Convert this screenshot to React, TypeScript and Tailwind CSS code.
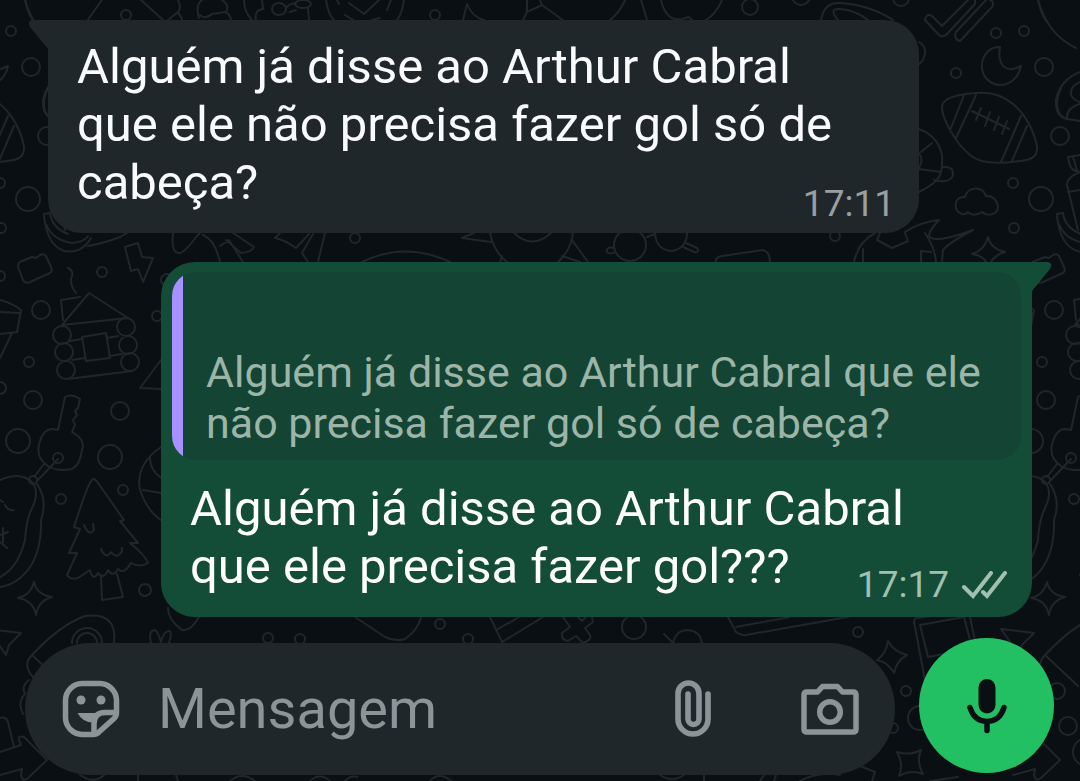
import type { ReactNode } from 'react';

const dots: [number, number, number][] = [
  [126, 15, 5], [167, 280, 6], [102, 272, 5], [41, 310, 9], [157, 316, 5], [29, 362, 5],
  [33, 400, 9], [18, 441, 12], [0, 388, 6], [120, 411, 9], [110, 457, 12], [61, 499, 5],
  [123, 490, 5], [145, 590, 6], [268, 638, 5], [300, 639, 5], [440, 624, 5], [468, 639, 5],
  [634, 627, 12], [858, 632, 5], [906, 691, 5], [920, 718, 12], [893, 728, 5], [1057, 691, 8],
  [1068, 726, 9], [435, 15, 5], [750, 7, 8], [801, -4, 9], [901, -2, 8], [996, 33, 5],
  [1024, 31, 5], [956, 73, 5], [1044, 67, 9], [1060, 136, 9], [1013, 183, 5], [1041, 199, 12],
  [1014, 228, 5], [835, 236, 5], [355, 238, 5], [1087, 752, 14], [1013, 276, 5],
];

const doodles = [
  // top edge
  'M25 0Q28 14 34 22 M102 0L87 21 M141 0L163 20 M178 0Q182 8 178 12L168 20 M178 12L182 19',
  'M199 18Q195 5 202 0 M200 15Q205 20 212 14L225 12Q230 14 231 20 M222 0Q230 5 226 12 M244 0Q244 12 252 20',
  'M262 0L263 9Q254 10 256 20 M272 9a7 6 0 1 0 14 0a7 6 0 1 0-14 0 M295 4a8 4 0 1 0 16 0a8 4 0 1 0-16 0 M286 8Q291 2 296 4 M308 8L309 20 M290 12l6-2',
  'M326 0Q328 14 334 20 M404 0Q402 14 397 20 M349 3L364 14L379 0 M337 0l2 4 M391 0l-4 10 M345 15l8 5 M372 20l8-2',
  'M463 20L467 4Q472 17 484 20 M527 0L527 12L523 20 M527 12L542 5L564 21 M540 0L542 5',
  'M625 0Q620 12 610 20 M641 0L647 20 M661 0Q666 22 682 19L689 17L692 20 M722 0Q716 14 706 20',
  'M821 20Q824 2 840 3Q870 5 893 20 M838 20Q828 8 840 9Q855 10 868 20',
  // check marks
  'M968 0L942 26L932 16Q926 13 925 20L939 35Q943 38 947 34L975 4V0 M986 0L956 32Q953 39 960 41L992 7Q995 2 990 0',
  'M1038 0Q1048 35 1076 48 M919 42Q926 46 925 54Q923 62 919 64',
  // moon and football
  'M1000 47C997 66 1006 74 1021 66C1018 80 1008 85 1000 85C988 84 981 75 982 64C983 54 990 47 1000 47Z',
  'M942 107C942 94 982 90 997 95C1022 104 1033 128 1037 146C1038 158 1030 160 1020 161C1000 164 980 164 970 155C955 143 942 118 942 107Z M964 95L951 128 M976 95L956 138 M1021 116L1001 162 M1027 126L1012 161',
  'M972 111L1009 129 M981 108l-5 12 M990 112l-5 14 M999 117l-5 13 M1007 121l-5 13',
  // wheel and cloud
  'M919 129Q938 136 942 155Q943 170 939 177Q935 184 919 192 M919 153Q924 160 919 168 M921 152L932 143 M919 169L941 172 M943 167Q954 166 953 175Q950 184 934 180',
  'M960 213C953 210 954 196 965 197C967 187 982 185 986 196C995 195 1001 206 996 212C990 217 984 214 982 212C976 216 970 215 968 212Q964 216 960 213Z',
  // egg and bottle
  'M1080 72Q1060 80 1056 100Q1055 116 1067 119L1080 121 M1080 82Q1070 86 1071 95Q1073 100 1080 102 M1067 119Q1066 108 1080 104',
  'M1068 157Q1070 172 1078 171 M1068 157L1080 155 M1073 157L1077 170 M1080 172Q1066 178 1067 185L1078 230 M1068 192L1080 190',
  // football player and flame
  'M854 262Q858 242 875 233 M925 233Q935 248 936 262 M863 262V249 M880 233L877 240L892 248L908 241L905 233 M921 262V251L931 252',
  'M905 232Q920 222 939 220Q925 235 931 238Q940 242 973 230Q950 242 943 250L942 262',
  'M988 237Q991 249 1005 252Q991 256 989 268Q985 255 972 254Q985 250 988 237Z',
  // strip between the messages
  'M48 88Q40 105 48 116 M44 214l6-1Q52 228 68 234 M44 216Q47 245 64 251Q82 254 91 238 M46 224Q52 240 72 243Q84 242 88 236 M88 246Q105 243 120 237L127 233',
  'M173 233Q171 252 178 253Q184 254 196 237L200 233 M203 235Q215 240 220 262 M233 233L254 247Q252 252 241 253L226 240 M220 246L229 240L243 262 M275 238Q285 240 296 248L309 234 M275 238L280 233 M325 233L318 262 M313 234L302 253L308 262',
  'M362 262Q405 241 450 262 M490 233Q494 252 507 262 M573 233Q571 250 558 262 M514 233Q532 250 551 233 M491 242L462 238L474 233 M572 240L588 262 M502 256L500 262 M562 256L580 262',
  'M614 245a16 16 0 1 0 32 0a16 16 0 1 0-32 0 M655 233Q656 250 672 251Q687 248 687 233 M647 237l8-3 M614 248q-8-2-7 4q3 3 8 0 M686 243L697 248Q700 253 694 252L683 247 M716 262Q715 257 722 256L763 250Q770 252 770 262',
  // brick, lightning, cabin
  'M18 267L23 280Q25 284 30 282L50 273Q53 271 51 267L46 256Q44 253 40 255L36 258L32 257L22 261Q18 262 18 267Z',
  'M125 247L138 243L142 257L153 258L143 282L138 269L131 271Z',
  'M68 268Q75 271 71 279Q70 285 76 293 M63 320L61 300L80 297 M62 325L89 293L128 318Z',
  'M82 337L106 333L110 358L86 361Z M70 341L82 339 M72 360L85 358 M68 379L132 371 M107 338L118 336 M109 356L122 354',
  'M53 335a9 9 0 1 0 18 0a9 9 0 1 0-18 0 M55 352a9 9 0 1 0 18 0a9 9 0 1 0-18 0 M57 370a9 9 0 1 0 18 0a9 9 0 1 0-18 0',
  'M117 327a9 9 0 1 0 18 0a9 9 0 1 0-18 0 M119 345a9 9 0 1 0 18 0a9 9 0 1 0-18 0 M121 362a9 9 0 1 0 18 0a9 9 0 1 0-18 0',
  'M0 300Q12 303 21 310L17 332L0 334 M0 312L20 313 M12 333L0 358 M161 360L140 388L161 389',
  // key ring
  'M58 430L65 397Q72 393 80 399L78 408L75 411L77 415L73 420L75 425L72 432Q86 440 82 450Q80 465 72 469Q58 472 48 466Q36 458 39 445Q42 430 52 429Z M53 458a5 5 0 1 0 10 0a5 5 0 1 0-10 0 M44 464L34 477 M58 459L37 481 M29 480a4 4 0 1 0 8 0a4 4 0 1 0-8 0',
  'M0 480Q20 471 32 482Q40 492 32 508Q26 520 25 540Q18 568 0 577 M37 484Q48 500 41 520Q42 560 20 578Q10 586 0 587 M0 500l3 2 M5 505Q8 511 14 510 M0 535L8 532 M0 542l7 6 M3 528v14',
  // tree and ornament
  'M92 480Q88 483 74 527L80 529L69 553L77 553L67 575Q70 580 78 578Q84 574 90 570Q93 582 98 573Q104 580 108 570Q113 578 118 569Q124 575 131 563Q140 568 148 563Q145 555 130 543L138 543L120 521L124 520L98 483Q94 477 92 480Z M101 577L102 600L123 597L117 574',
  'M84 525Q89 537 94 530L93 524 M101 549Q106 560 111 552Q117 560 122 551V548 M161 447Q135 465 140 490Q148 512 161 520 M150 458Q150 470 161 478 M143 490L161 493',
  'M34 582Q37 595 52 597Q38 601 36 615Q33 600 18 598Q31 595 34 582Z',
  // strip above the composer
  'M33 677Q22 665 32 655Q60 625 85 616Q118 612 114 643 M72 643a15 15 0 0 1 30 0 M77 643a10 10 0 0 1 20 0 M32 655L65 686 M168 608Q168 620 182 630Q190 632 199 617',
  'M151 643Q148 630 155 630Q158 632 161 642Q164 630 170 631Q172 634 169 643 M355 617L385 637Q395 642 405 639Q418 630 421 617',
  'M490 617L502 642L543 617 M498 629L519 617 M563 617L570 627L562 633Q561 640 568 641L576 636L583 643Q592 640 590 635L585 628L593 622L592 617 M578 617L582 621L586 617',
  'M673 643Q676 630 688 630Q700 631 702 643 M664 634L673 643 M728 617L736 632Q740 635 746 635L780 629L848 617 M736 627L790 617',
  'M888 641Q894 652 907 655Q897 660 894 673Q888 662 877 660Q886 654 888 641Z',
  'M925 680L914 622Q914 618 918 618L960 612 M964 617L970 640 M970 617L976 645 M920 625L964 617 M920 625L928 657L955 652',
  'M897 752Q910 756 921 750Q916 762 923 774Q910 769 899 776Q904 764 897 752Z',
  'M1001 629L1034 633L1022 645L1019 655Z',
  // bottom edge
  'M29 680q-8 6-4 14q-8 8-2 20 M0 718Q6 716 8 722L14 747 M0 752L21 745L19 740Q18 735 24 737L47 760L28 778Q22 782 21 775L22 769L0 775',
  'M80 775Q95 785 105 774 M138 775v6 M176 775l2 6 M230 781Q242 771 255 781 M310 781Q320 772 330 781 M345 781q6-6 12-4 M430 781q8-10 22 0 M660 775q12 8 24 0 M704 775v6 M760 781l4-6 M776 775l-2 6 M800 781q20-10 40-6 M860 766l15 6l-3 9 M930 781l28-4',
];

function Wallpaper() {
  return (
    <svg
      aria-hidden="true"
      className="absolute inset-0 h-full w-full"
      fill="none"
      stroke="#20262a"
      strokeWidth={2}
      strokeLinejoin="round"
      strokeLinecap="round"
    >
      <g id="doodles">
        {dots.map(([x, y, r]) => (
          <circle key={`${x}-${y}`} cx={x} cy={y} r={r} />
        ))}
        {doodles.map((d) => (
          <path key={d} d={d} />
        ))}
      </g>
      {/* the pattern repeats sideways */}
      <use href="#doodles" x={-1013} />
      <use href="#doodles" x={1013} />
    </svg>
  );
}

// The time floats beside the last line of the text
function MessageText({ children }: { children: ReactNode }) {
  return <p className="flow-root pr-10 text-[49px] leading-[58px]">{children}</p>;
}

function StickerIcon() {
  return (
    <svg className="size-[58px]" viewBox="0 0 58 58" fill="none" aria-hidden="true">
      <path
        d="M20 3.500H38A17 17 0 0 1 54.500 20V32.500Q54.500 36 52 38.500L37 52Q34.500 54.500 31 54.500H20A17 17 0 0 1 3.500 38V20A17 17 0 0 1 20 3.500Z"
        stroke="currentColor"
        strokeWidth={5.500}
      />
      <circle cx="19" cy="20" r="4.500" fill="currentColor" />
      <circle cx="39" cy="20" r="4.500" fill="currentColor" />
      <path d="M15.500 33H36Q32 38 32 42.500Q21 43 15.500 33Z" fill="currentColor" />
      <path d="M32 54V44Q32 32.500 43 32.500H54" stroke="currentColor" strokeWidth={5.500} />
    </svg>
  );
}

function ClipIcon() {
  return (
    <svg className="h-[58px] w-9" viewBox="0 0 36 58" fill="none" aria-hidden="true">
      <path
        d="M33 14V39A15 15 0 0 1 3 39V13.500A10.500 10.500 0 0 1 24 13.500V39A5.500 5.500 0 0 1 13 39V14"
        stroke="currentColor"
        strokeWidth={5.600}
        strokeLinecap="round"
      />
    </svg>
  );
}

function CameraIcon() {
  return (
    <svg className="h-[52px] w-[58px]" viewBox="0 0 58 52" fill="none" aria-hidden="true">
      <path
        d="M6 9H16.500L21.500 3.500H36.500L41.500 9H52Q55 9 55 12V46Q55 49 52 49H6Q3 49 3 46V12Q3 9 6 9Z"
        stroke="currentColor"
        strokeWidth={5.500}
        strokeLinejoin="round"
      />
      <circle cx="29" cy="29" r="10.300" stroke="currentColor" strokeWidth={5.500} />
    </svg>
  );
}

function MicIcon() {
  return (
    <svg className="h-14 w-10" viewBox="0 0 40 56" fill="none" aria-hidden="true">
      <rect x="11.500" y="1" width="17" height="34.500" rx="8.500" fill="currentColor" />
      <path
        d="M3 29.500Q7 43 20 43.500Q33 43 37 29.500M20 43.500V52.500"
        stroke="currentColor"
        strokeWidth={5.500}
        strokeLinecap="round"
      />
    </svg>
  );
}

function Ticks() {
  return (
    <svg className="h-7 w-[46px]" viewBox="0 0 46 28" fill="none" aria-label="Entregue" role="img">
      <path
        d="M3 16L12 25L30 2M22 21L26 25L44 2"
        stroke="currentColor"
        strokeWidth={4}
        strokeLinecap="round"
      />
    </svg>
  );
}

export default function App() {
  return (
    <div className="relative flex min-h-screen flex-col overflow-hidden bg-[#0a0f13] font-[Roboto,sans-serif]">
      <Wallpaper />

      <main className="relative flex flex-col gap-[29px] pt-5">
        {/* Received */}
        <article className="relative mr-[161px] ml-12 rounded-[34px] rounded-tl-none bg-[#20272a] pt-[18px] pr-6 pb-[7px] pl-[29px] text-[#f8fafc]">
          <svg
            className="absolute top-0 right-full h-[30px] w-5"
            viewBox="0 0 20 30"
            fill="#20272a"
            aria-hidden="true"
          >
            <path d="M20 0H4Q-1 1 2 7L20 29Z" />
          </svg>
          <MessageText>
            Alguém já disse ao Arthur Cabral que ele não precisa fazer gol só de cabeça?
            <time className="float-right mt-7 -mr-10 text-[37px] leading-[44px] text-[#999fa1]">
              17:11
            </time>
          </MessageText>
        </article>

        {/* Sent, with the quoted message */}
        <article className="relative mr-12 ml-[161px] flex flex-col rounded-[34px] rounded-tr-none bg-[#144d37] px-[11px] py-[10px] text-white">
          <svg
            className="absolute top-0 left-full h-[30px] w-5"
            viewBox="0 0 20 30"
            fill="#144d37"
            aria-hidden="true"
          >
            <path d="M0 0H16Q21 1 18 7L0 29Z" />
          </svg>
          <blockquote className="flex overflow-hidden rounded-3xl bg-[#144433]">
            <div className="w-[11px] shrink-0 bg-[#a791ff]" />
            <p className="pt-[75px] pr-6 pb-[11px] pl-[23px] text-[43px] leading-[51px] text-[#9bb5a9]">
              Alguém já disse ao Arthur Cabral que ele não precisa fazer gol só de cabeça?
            </p>
          </blockquote>
          <div className="pt-5 pr-[14px] pl-[18px]">
            <MessageText>
              Alguém já disse ao Arthur Cabral que ele precisa fazer gol???
              <span className="float-right mt-[25px] -mr-10 flex items-center gap-3 text-[#a0c0b1]">
                <time className="text-[37px] leading-[44px]">17:17</time>
                <Ticks />
              </span>
            </MessageText>
          </div>
        </article>
      </main>

      <form
        className="relative mt-[21px] flex items-start gap-6 pr-[26px] pb-2 pl-[25px]"
        onSubmit={(e) => e.preventDefault()}
      >
        <div className="mt-[5px] flex h-[132px] min-w-0 flex-1 items-center rounded-full bg-[#20272a] pr-9 pl-[37px] text-[#8b9598]">
          <button type="button" aria-label="Figurinhas">
            <StickerIcon />
          </button>
          <input
            type="text"
            aria-label="Mensagem"
            placeholder="Mensagem"
            className="ml-[38px] min-w-0 flex-1 bg-transparent text-[56px] leading-[66px] text-[#f8fafc] outline-none placeholder:text-[#8b9598]"
          />
          <button type="button" aria-label="Anexar">
            <ClipIcon />
          </button>
          <button type="button" aria-label="Câmera" className="ml-[90px]">
            <CameraIcon />
          </button>
        </div>
        <button
          type="button"
          aria-label="Gravar áudio"
          className="flex size-[135px] shrink-0 items-center justify-center rounded-full bg-[#22c063] text-[#0a0f13]"
        >
          <MicIcon />
        </button>
      </form>
    </div>
  );
}
